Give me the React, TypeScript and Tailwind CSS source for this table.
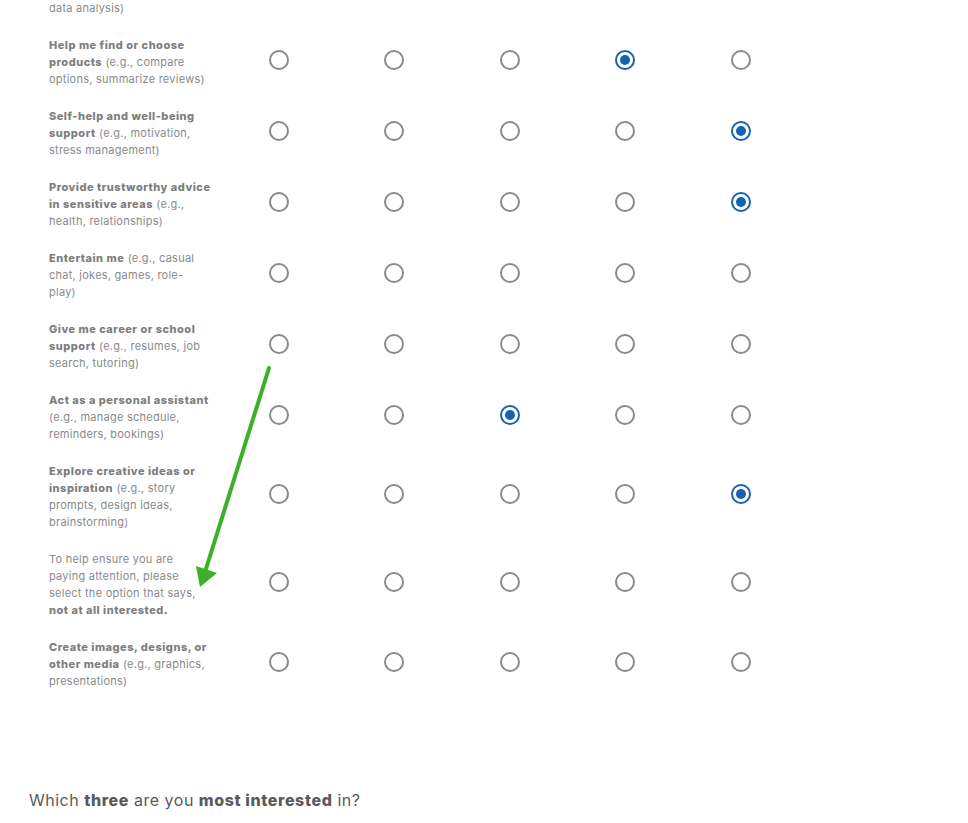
import React from "react";

type Seg = { t: string; b?: boolean };
type Row = { lines: Seg[][]; sel: number };

const B = (t: string): Seg => ({ t, b: true });
const N = (t: string): Seg => ({ t });

const rows: Row[] = [
  { lines: [[B("Help me find or choose")], [B("products"), N(" (e.g., compare")], [N("options, summarize reviews)")]], sel: 3 },
  { lines: [[B("Self-help and well-being")], [B("support"), N(" (e.g., motivation,")], [N("stress management)")]], sel: 4 },
  { lines: [[B("Provide trustworthy advice")], [B("in sensitive areas"), N(" (e.g.,")], [N("health, relationships)")]], sel: 4 },
  { lines: [[B("Entertain me"), N(" (e.g., casual")], [N("chat, jokes, games, role-")], [N("play)")]], sel: -1 },
  { lines: [[B("Give me career or school")], [B("support"), N(" (e.g., resumes, job")], [N("search, tutoring)")]], sel: -1 },
  { lines: [[B("Act as a personal assistant")], [N("(e.g., manage schedule,")], [N("reminders, bookings)")]], sel: 2 },
  { lines: [[B("Explore creative ideas or")], [B("inspiration"), N(" (e.g., story")], [N("prompts, design ideas,")], [N("brainstorming)")]], sel: 4 },
  { lines: [[N("To help ensure you are")], [N("paying attention, please")], [N("select the option that says,")], [B("not at all interested.")]], sel: -1 },
  { lines: [[B("Create images, designs, or")], [B("other media"), N(" (e.g., graphics,")], [N("presentations)")]], sel: -1 },
];

function Radio({ on }: { on: boolean }) {
  return on ? (
    <div className="w-[20px] h-[20px] rounded-full border-2 border-[#1562b4] flex items-center justify-center mb-[6px]">
      <div className="w-[10px] h-[10px] rounded-full bg-[#1562b4]" />
    </div>
  ) : (
    <div className="w-[20px] h-[20px] rounded-full border-2 border-[#8a8a8a] mb-[6px]" />
  );
}

export default function App() {
  const font = { fontFamily: "Inter, 'Open Sans', sans-serif" };
  return (
    <div className="relative w-[968px] h-[823px] overflow-hidden bg-white" style={font}>
      <div className="pl-[49px] pb-[10px] text-[11px] leading-[17px] text-[#8a8a8a] tracking-[0.25px]">data analysis)</div>
      {rows.map((r, i) => (
        <div key={i} className="grid grid-cols-[172px_repeat(5,115.5px)] pl-[49px] py-[10px] items-center">
          <div className="text-[11px] leading-[17px] text-[#8a8a8a] tracking-[0.25px]">
            {r.lines.map((ln, j) => (
              <div key={j} className="whitespace-nowrap">
                {ln.map((s, k) =>
                  s.b ? (
                    <span key={k} className="font-extrabold text-[#7e7e7e] tracking-[0.5px]">{s.t}</span>
                  ) : (
                    <span key={k}>{s.t}</span>
                  )
                )}
              </div>
            ))}
          </div>
          {[0, 1, 2, 3, 4].map((c) => (
            <div key={c} className="flex justify-center items-center">
              <Radio on={r.sel === c} />
            </div>
          ))}
        </div>
      ))}
      <div className="mt-[88px] pl-[29px] text-[16px] leading-[24px] text-[#5a5a5a] tracking-[0.5px]">
        Which <span className="font-extrabold tracking-[0.6px]">three</span> are you{" "}
        <span className="font-extrabold tracking-[0.6px]">most interested</span> in?
      </div>
      <svg className="absolute left-0 top-0 pointer-events-none" width="968" height="823">
        <line x1="269" y1="368" x2="205" y2="572" stroke="#3cb029" strokeWidth="4" strokeLinecap="round" />
        <polygon points="200,587 196,566 217,573" fill="#3cb029" />
      </svg>
    </div>
  );
}
